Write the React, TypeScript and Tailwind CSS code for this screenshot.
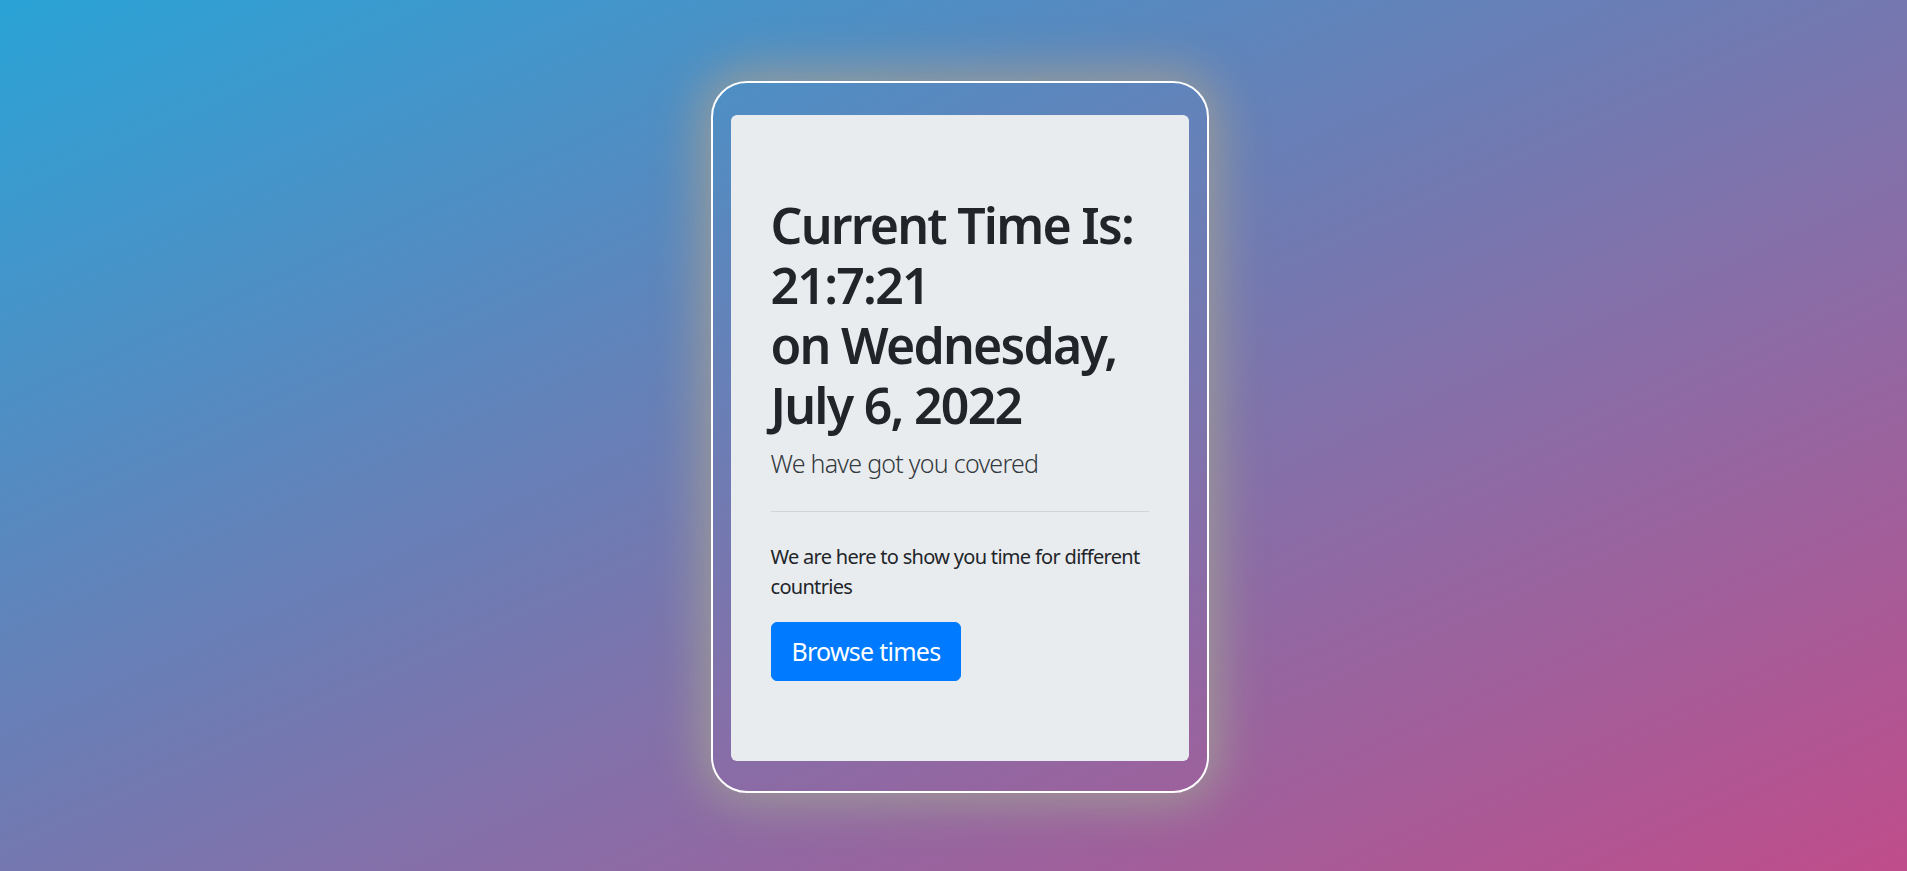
export default function App() {
  return (
    <div
      className="min-h-screen w-full bg-[linear-gradient(to_bottom_right,#2aa3d6,#c04d8b)] pt-[81px]"
      style={{ fontFamily: '"Noto Sans", "Open Sans", sans-serif' }}
    >
      <div className="flex justify-center">
        {/* Outer glowing card */}
        <div className="ml-[12px] w-[498px] rounded-[36px] border-2 border-white px-[18px] pt-[32px] pb-[30px] shadow-[0_0_50px_8px_rgba(160,158,150,0.95)]">
          {/* Jumbotron */}
          <div className="rounded-[6px] bg-[#e9ecef] px-[40px] py-[80px] text-[#212529]">
            <h1 className="mb-[10px] text-[50px] font-semibold leading-[60px] tracking-[-0.035em]">
              <span className="block whitespace-nowrap">Current Time Is:</span>
              <span className="block whitespace-nowrap">21:7:21</span>
              <span className="block whitespace-nowrap">on Wednesday,</span>
              <span className="block whitespace-nowrap">July 6, 2022</span>
            </h1>
            <p className="mb-[20px] text-[25px] font-light leading-[37.5px] tracking-[-0.03em] text-[#343a40]">
              We have got you covered
            </p>
            <hr className="mt-[28px] mb-[30px] border-t border-black/10" />
            <p className="mb-[20px] text-[20px] leading-[30px] tracking-[-0.035em]">
              We are here to show you time for different countries
            </p>
            <button className="rounded-[6px] border border-[#007bff] bg-[#007bff] px-[20px] py-[10px] text-[25px] leading-[37.5px] tracking-[-0.03em] text-white">
              Browse times
            </button>
          </div>
        </div>
      </div>
    </div>
  );
}
